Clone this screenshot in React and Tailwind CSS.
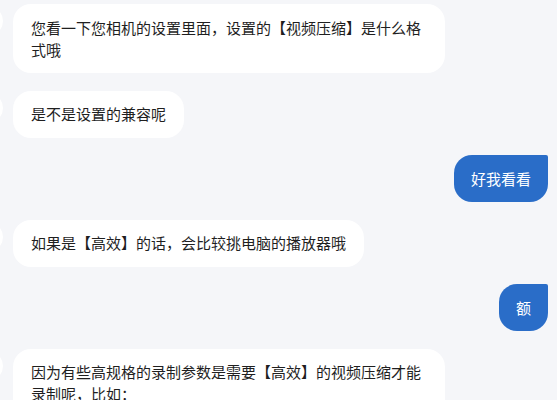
import React from "react";

const font = { fontFamily: '"Noto Sans CJK SC", "Noto Sans", sans-serif' };

function Left({ children }) {
  return (
    <div className="flex items-start">
      <div className="w-[30px] h-[30px] shrink-0 rounded-full bg-white ml-[-40px] mr-[10px] mt-[2px]" />
      <div className="max-w-[432px] bg-white rounded-[18px] px-[18px] py-[12.5px] text-[15px] leading-[22px] text-[#1f1f1f]">
        {children}
      </div>
    </div>
  );
}

function Right({ children }) {
  return (
    <div className="flex justify-end">
      <div className="bg-[#2a6dc8] rounded-[18px] rounded-tr-[2px] px-[17px] py-[12.5px] text-[15px] leading-[22px] text-white">
        {children}
      </div>
    </div>
  );
}

export default function App() {
  return (
    <div className="w-[557px] h-[400px] overflow-hidden bg-[#f5f6f9]" style={font}>
      <div className="flex flex-col gap-[17.5px] pt-[4px] pl-[13px] pr-[9px]">
        <Left>您看一下您相机的设置里面，设置的【视频压缩】是什么格式哦</Left>
        <Left>是不是设置的兼容呢</Left>
        <Right>好我看看</Right>
        <Left>如果是【高效】的话，会比较挑电脑的播放器哦</Left>
        <Right>额</Right>
        <Left>因为有些高规格的录制参数是需要【高效】的视频压缩才能录制呢，比如：</Left>
      </div>
    </div>
  );
}
